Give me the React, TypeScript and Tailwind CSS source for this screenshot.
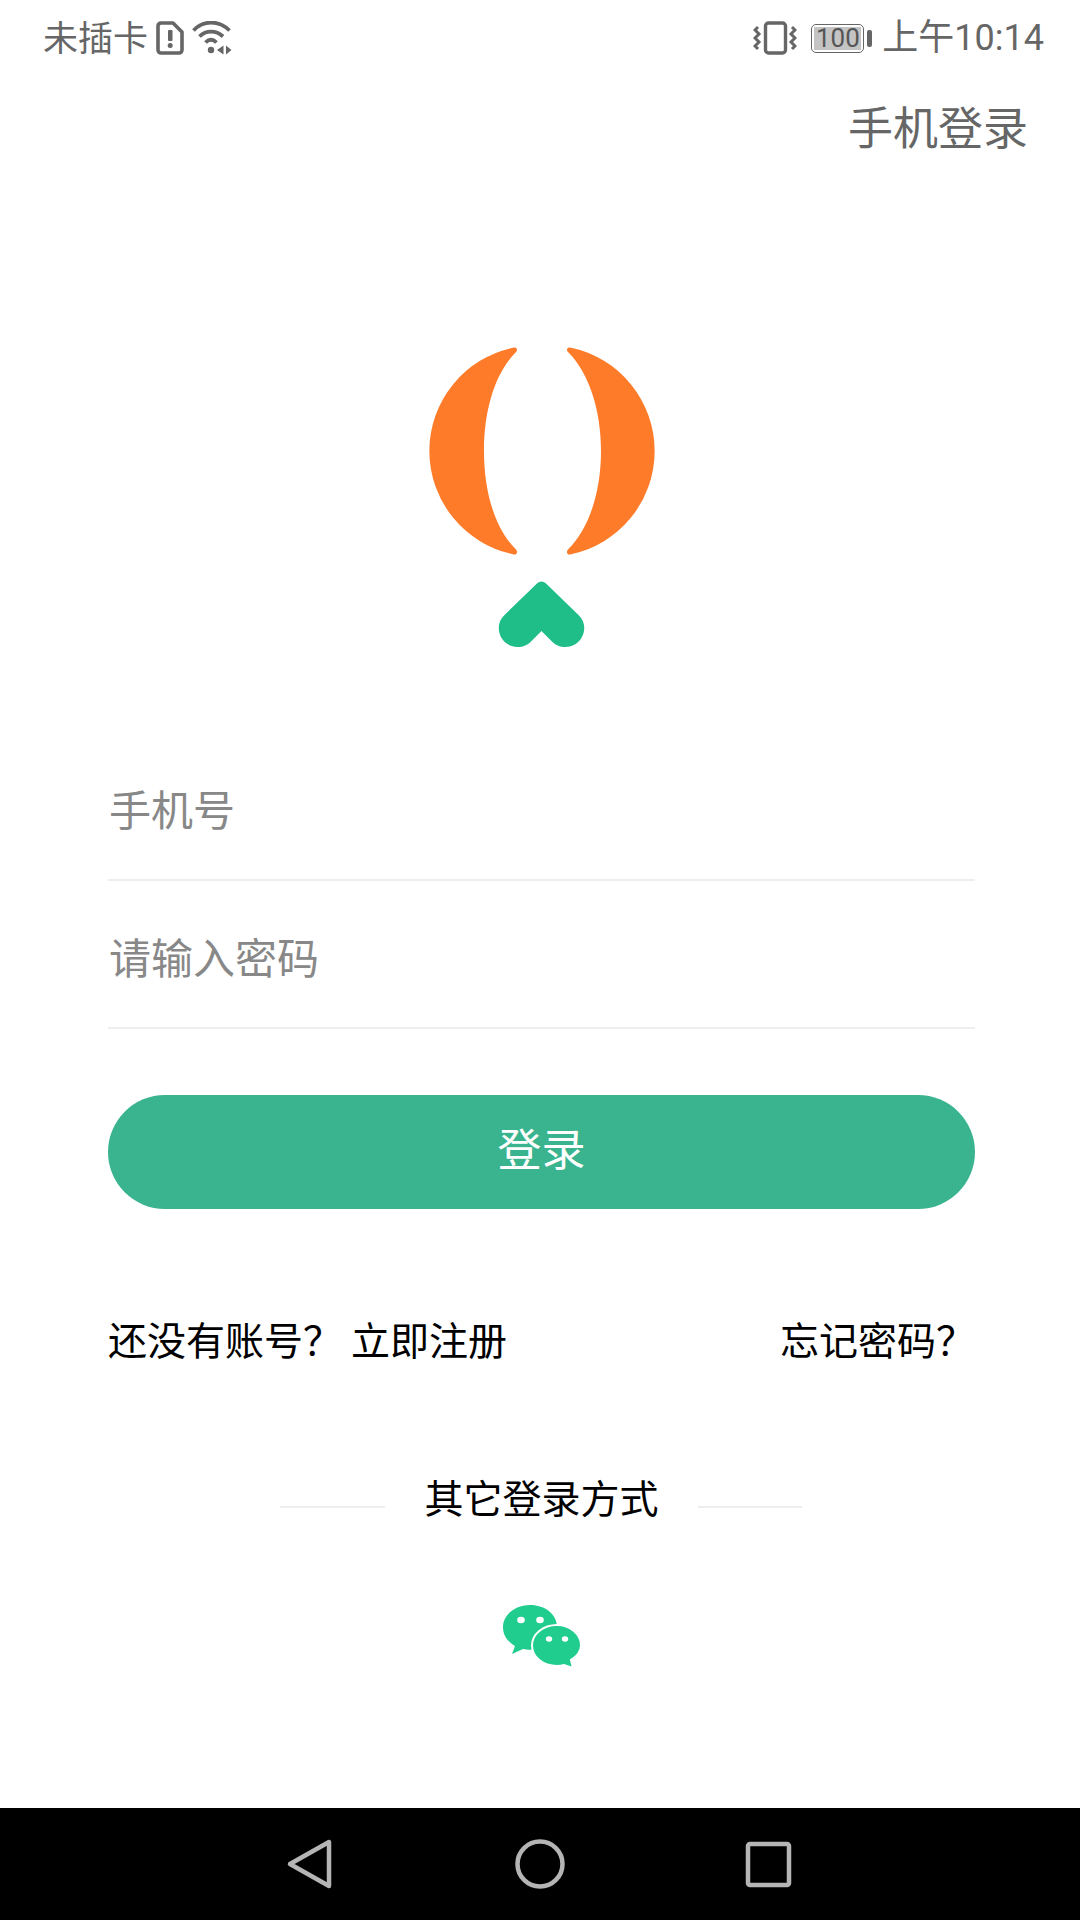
const FONT = 'Roboto, "Liberation Sans", "Noto Sans CJK SC", sans-serif';
const CJK = '"Noto Sans CJK SC", sans-serif';

function SimIcon() {
  return (
    <svg width="28" height="34" viewBox="0 0 28 34" className="block">
      <path d="M6 2h11l9 9v18a3 3 0 0 1-3 3H5a3 3 0 0 1-3-3V5a3 3 0 0 1 3-3z" fill="none" stroke="#666" strokeWidth="3.6" strokeLinejoin="round" />
      <rect x="12" y="9" width="4.500" height="11" rx="1" fill="#666" />
      <circle cx="14.200" cy="24.500" r="2.500" fill="#666" />
    </svg>
  );
}

function WifiIcon() {
  return (
    <svg width="40" height="34" viewBox="0 0 40 34" className="block">
      <path d="M1.500 9.500C11-1 27-1 37.500 9.500" fill="none" stroke="#666" strokeWidth="3.800" />
      <path d="M7.500 15.500C14 9 24 9 31 15.500" fill="none" stroke="#666" strokeWidth="3.800" />
      <path d="M13.500 21.500C17 18 21 18 24.500 21.500" fill="none" stroke="#666" strokeWidth="3.800" />
      <circle cx="19" cy="29" r="3.200" fill="#666" />
      <path d="M31.500 24.500v9l-6.500-4.500zM34 24.500v9l5.500-4.500z" fill="#666" />
    </svg>
  );
}

function VibrateIcon() {
  return (
    <svg width="44" height="34" viewBox="0 0 44 34" className="block">
      <rect x="12.500" y="2" width="20" height="30" rx="3" fill="none" stroke="#666" strokeWidth="3.400" />
      <path d="M5 6L2 9l4 4-4 4 4 4-4 4 3 3" fill="none" stroke="#666" strokeWidth="3" />
      <path d="M39 6l3 3-4 4 4 4-4 4 4 4-3 3" fill="none" stroke="#666" strokeWidth="3" />
    </svg>
  );
}

function Battery() {
  return (
    <div className="flex items-center gap-[3px]">
      <div className="w-[53px] h-[29px] rounded-[5px] border border-[#666] p-[2px]">
        <div className="w-full h-full bg-[#c4c4c4] flex items-center justify-center text-[26px] text-[#555] leading-none">
          100
        </div>
      </div>
      <div className="w-[5px] h-[17px] rounded-[2px] bg-[#666]" />
    </div>
  );
}

function StatusBar() {
  return (
    <div className="h-[76px] pl-[43px] pr-[36px] flex items-center justify-between text-[#666]">
      <div className="flex items-center">
        <span className="text-[35px] leading-none pb-[5px]" style={{ fontFamily: CJK }}>未插卡</span>
        <div className="ml-[8px]"><SimIcon /></div>
        <div className="ml-[8px]"><WifiIcon /></div>
      </div>
      <div className="flex items-center">
        <VibrateIcon />
        <div className="ml-[14px]"><Battery /></div>
        <span className="ml-[10px] text-[36px] leading-none">上午10:14</span>
      </div>
    </div>
  );
}

function Logo() {
  return (
    <svg width="226" height="302" viewBox="0 0 226 302" className="block">
      <path d="M85 1.500A105.600 105.600 0 0 0 85 208.500c3 .5 4-3 2-5C66 183 55 146 55 105S66 27 87 6c2-2 1-5-2-4.500z" fill="#fe7b2a" />
      <path d="M141 1.500A105.600 105.600 0 0 1 141 208.500c-3 .5-4-3-2-5C160 183 172 146 172 105S160 27 139 6c-2-2-1-5 2-4.500z" fill="#fe7b2a" />
      <path d="M108.500 237a6 6 0 0 1 8 0l33 32c12 11 4 32-13 32-6 0-10-2-14-6l-10-10-10 10c-4 4-8 6-14 6-17 0-25-21-13-32z" fill="#1fbd87" />
    </svg>
  );
}

function Field({ label }: { label: string }) {
  return (
    <div className="h-[148px] flex items-center border-b-2 border-[#eeeeee] pt-[3px] text-[42px] text-[#888] pl-[1px]">
      {label}
    </div>
  );
}

function WechatIcon() {
  return (
    <svg width="78" height="63" viewBox="0 0 78 63" className="block">
      <path d="M27 0C12 0 0 10 0 22c0 8 4 14 12 19L9 49l11-5c2 .5 5 .8 7 .8 15 0 27-10 27-22.800S42 0 27 0z" fill="#20cd8f" />
      <path d="M54 20C40 20 29 29 29 40.500S40 61 54 61c3 0 5-.3 7-1l9 3-2-8c6-3 10-9 10-14.500C78 29 67 20 54 20z" fill="#20cd8f" stroke="#fff" strokeWidth="2" />
      <ellipse cx="18" cy="15" rx="3.800" ry="3.200" fill="#fff" />
      <ellipse cx="37" cy="15" rx="3.800" ry="3.200" fill="#fff" />
      <ellipse cx="46" cy="34" rx="3.200" ry="2.800" fill="#fff" />
      <ellipse cx="62" cy="34" rx="3.200" ry="2.800" fill="#fff" />
    </svg>
  );
}

function NavBar() {
  return (
    <div className="h-[112px] bg-black flex items-center justify-center">
      <svg width="520" height="52" viewBox="0 0 520 52" className="block">
        <path d="M49 4v44L10 26z" fill="none" stroke="#b5b5b5" strokeWidth="4.500" strokeLinejoin="round" />
        <circle cx="260" cy="26" r="22.500" fill="none" stroke="#b5b5b5" strokeWidth="4.500" />
        <rect x="468" y="6" width="41" height="41" rx="2" fill="none" stroke="#b5b5b5" strokeWidth="4.500" />
      </svg>
    </div>
  );
}

export default function App() {
  return (
    <div className="w-[1080px] h-[1920px] bg-white flex flex-col overflow-hidden" style={{ fontFamily: FONT }}>
      <StatusBar />

      <div className="flex-1 flex flex-col" style={{ fontFamily: CJK }}>
        {/* Header */}
        <div className="flex justify-end pr-[52px] pt-[20px] text-[45px] leading-[60px] text-[#666]">手机登录</div>

        {/* Logo */}
        <div className="flex justify-center pt-[190px] pl-[3px]">
          <Logo />
        </div>

        {/* Form */}
        <div className="pl-[108px] pr-[105px] mt-[85px]">
          <Field label="手机号" />
          <Field label="请输入密码" />
          <button className="mt-[66px] w-full h-[114px] rounded-full bg-[#3ab48f] text-white text-[44px] flex items-center justify-center pb-[10px]">
            登录
          </button>
          <div className="mt-[104px] flex justify-between text-[39px] leading-[50px] text-black">
            <div className="flex gap-[9px]">
              <span>还没有账号？</span>
              <span>立即注册</span>
            </div>
            <span>忘记密码？</span>
          </div>
        </div>

        {/* Other login */}
        <div className="mt-[108px] pl-[2px] flex items-center justify-center text-[39px] leading-[50px] text-black">
          <div className="w-[105px] h-[2px] bg-[#eeeeee] mt-[22px]" />
          <span className="mx-[39px]">其它登录方式</span>
          <div className="w-[104px] h-[2px] bg-[#eeeeee] mt-[22px]" />
        </div>
        <div className="flex justify-center mt-[84px] pl-[3px]">
          <WechatIcon />
        </div>
      </div>

      <NavBar />
    </div>
  );
}
